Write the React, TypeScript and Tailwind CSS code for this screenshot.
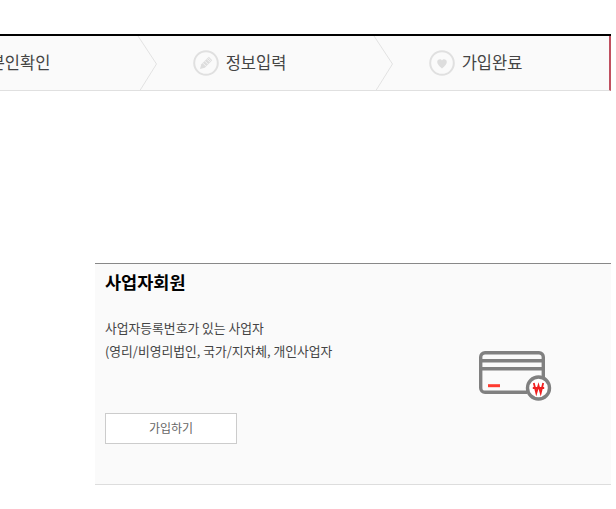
import React from 'react';

const Chevron = () => (
  <svg className="absolute right-0 top-0" width="20" height="56" viewBox="0 0 20 56" fill="none">
    <path d="M1 0 L19.5 28 L2 56" stroke="#e2e2e2" strokeWidth="1" />
  </svg>
);

const PencilIcon = () => (
  <svg width="26" height="26" viewBox="0 0 26 26" fill="none">
    <circle cx="13" cy="13" r="11.8" stroke="#e0e0e0" strokeWidth="2" />
    <path d="M7 19 L8.3 14.2 L15.8 6.8 L19.2 10.2 L11.8 17.7 Z" fill="#dddddd" />
    <path d="M10 13.2 L12.8 16 M12 11.2 L14.8 14 M14 9.2 L16.8 12 M15.2 8 L18 10.8" stroke="#fafafa" strokeWidth="0.8" />
  </svg>
);

const HeartIcon = () => (
  <svg width="26" height="26" viewBox="0 0 26 26" fill="none">
    <circle cx="13" cy="13" r="11.8" stroke="#e0e0e0" strokeWidth="2" />
    <path d="M13 18.5 C10 15.8 8.2 14.2 8.2 12 C8.2 10.2 9.5 9.3 10.8 9.3 C11.8 9.3 12.6 9.8 13 10.6 C13.4 9.8 14.2 9.3 15.2 9.3 C16.5 9.3 17.8 10.2 17.8 12 C17.8 14.2 16 15.8 13 18.5 Z" fill="#dddddd" />
  </svg>
);

const CardIcon = () => (
  <svg width="73" height="52" viewBox="0 0 73 52" fill="none">
    <path d="M64.3 27 V6 a4.3 4.3 0 0 0 -4.3 -4.3 H6 a4.3 4.3 0 0 0 -4.3 4.3 V37 a4.3 4.3 0 0 0 4.3 4.3 H48" stroke="#808080" strokeWidth="3.4" />
    <path d="M2 9.7 H64 M2 17.7 H64" stroke="#808080" strokeWidth="3.4" />
    <path d="M9 34.7 H21" stroke="#ff3b30" strokeWidth="3" />
    <circle cx="59.5" cy="37" r="11" fill="#ffffff" stroke="#808080" strokeWidth="3.4" />
    <path d="M54.8 32 L57.3 42 L59.5 34.5 L61.7 42 L64.2 32 M53.8 37 H65.2" stroke="#f02020" strokeWidth="1.8" />
  </svg>
);

const Step = ({ icon, label, chevron }: { icon: React.ReactNode; label: string; chevron?: boolean }) => (
  <div className="relative flex h-full w-[236px] shrink-0 items-center justify-center gap-[7px] pr-[71px]">
    {icon}
    <span className="pb-[2px] text-[16.5px] text-[#444444]">{label}</span>
    {chevron && <Chevron />}
  </div>
);

export default function App() {
  return (
    <div className="h-[509px] w-[616px] overflow-hidden bg-white font-['Noto_Sans_CJK_KR','Noto_Sans',sans-serif]">
      <div className="h-[34px]" />
      <div className="w-[611px] border-t-2 border-black">
        <div className="flex h-[55px] items-center overflow-hidden border-b border-r-2 border-b-[#e0e0e0] border-r-[#c05060] bg-[#fafafa]">
          <div className="-ml-[79px] flex h-full">
            <Step label="본인확인" icon={<PencilIcon />} chevron />
            <Step label="정보입력" icon={<PencilIcon />} chevron />
            <Step label="가입완료" icon={<HeartIcon />} />
          </div>
        </div>
      </div>
      <div className="ml-[95px] mt-[172px] h-[222px] w-[516px] border-y border-b-[#dddddd] border-t-[#888888] bg-[#fafafa] pl-[10px] pt-[4px]">
        <h2 className="text-[17.5px] font-bold leading-[28px] text-black">사업자회원</h2>
        <div className="flex">
          <div className="w-[374px]">
            <p className="mt-[20px] text-[12.8px] leading-[23px] text-[#444444]">
              사업자등록번호가 있는 사업자
              <br />
              (영리/비영리법인, 국가/지자체, 개인사업자
            </p>
            <button className="mt-[51px] h-[31px] w-[132px] border border-[#cccccc] bg-white pb-[2px] text-[12px] text-[#666666]">
              가입하기
            </button>
          </div>
          <div className="mt-[55px]">
            <CardIcon />
          </div>
        </div>
      </div>
    </div>
  );
}
